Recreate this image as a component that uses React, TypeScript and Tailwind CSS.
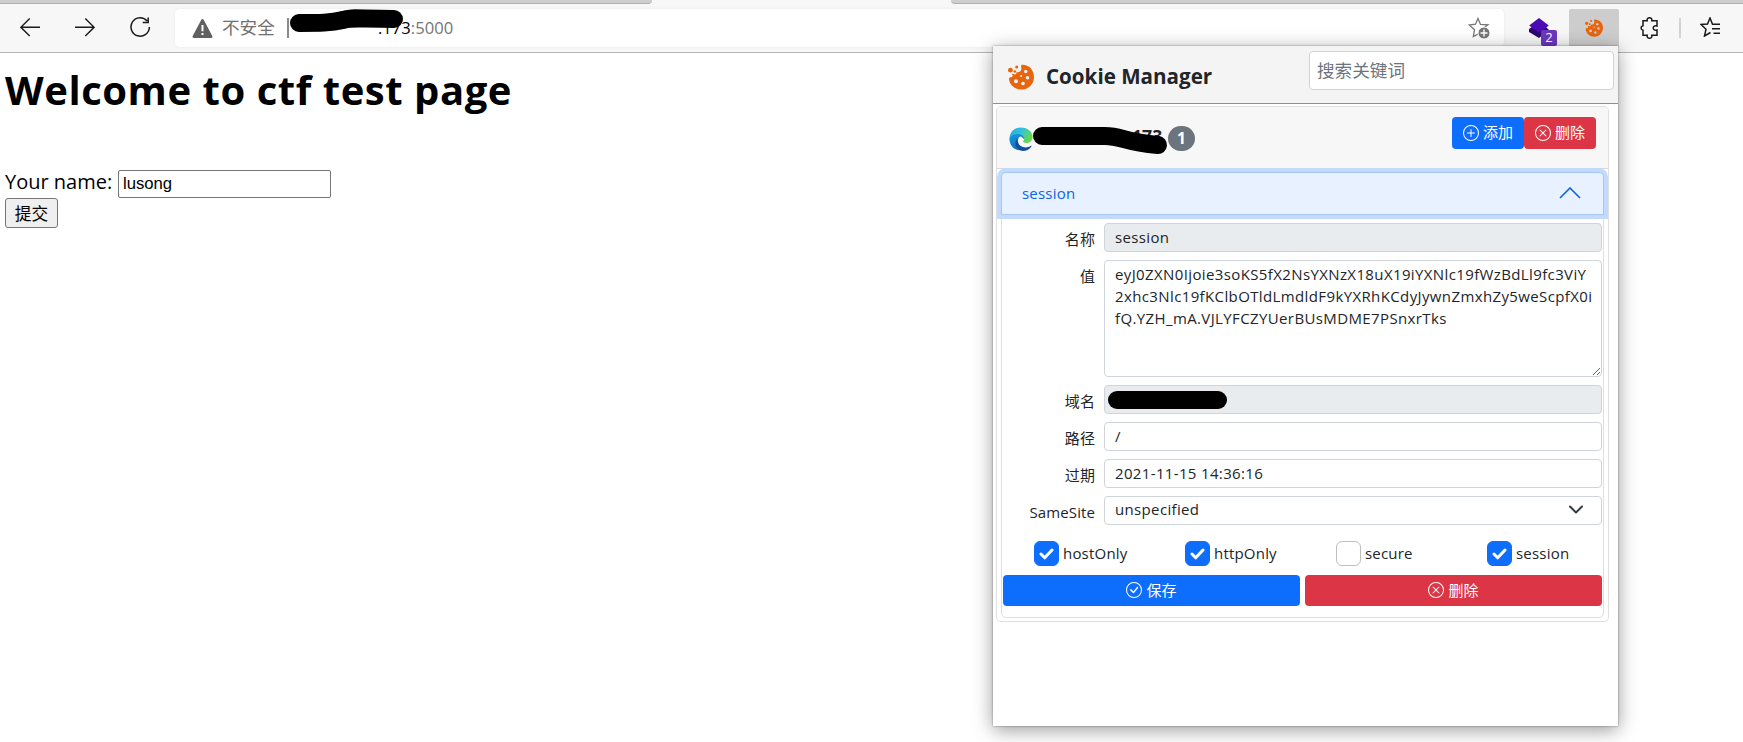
import React, { useState } from 'react';
import { BsPlusCircle, BsXCircle, BsCheckCircle } from 'react-icons/bs';

const cookieValue = [
  'eyJ0ZXN0Ijoie3soKS5fX2NsYXNzX18uX19iYXNlc19fWzBdLl9fc3ViY',
  '2xhc3Nlc19fKClbOTldLmdldF9kYXRhKCdyJywnZmxhZy5weScpfX0i',
  'fQ.YZH_mA.VJLYFCZYUerBUsMDME7PSnxrTks',
].join('\n');

const CookieIcon: React.FC<{ className?: string; hole: string }> = ({ className, hole }) => (
  <svg viewBox="0 0 26 26" className={className}>
    <path
      fill="#e8650d"
      d="M13.5 .8C20.8 .3 26 6 26 12.9A12.6 12.6 0 0 1 13.3 25.6C7 25.6 2.2 21.6 1 15.6c-.2-1 .2-1.9 1.2-2.5.9.5 2 .2 2.3-.8.3-.9 0-1.7-.8-2.2 1-.5 2-.3 2.8.5 1.5-.2 2.2-1.2 2-2.6 2.3.7 4.600-.7 4.900-3.100C13.500 3.500 12.600 2.300 13.500.8z"
    />
    <circle cx="2.4" cy="6.2" r="2.4" fill="#e8650d" />
    <circle cx="8.7" cy="3" r="1.5" fill="#e8650d" />
    <circle cx="6.8" cy="7.5" r="1.3" fill="#e8650d" />
    <g fill={hole}>
      <circle cx="17.7" cy="7.5" r="1.7" />
      <circle cx="13.2" cy="12" r="1" />
      <circle cx="19.5" cy="13.7" r="1.8" />
      <circle cx="8" cy="17.2" r="2" />
      <circle cx="15" cy="19.5" r="1.8" />
    </g>
  </svg>
);

const EdgeIcon: React.FC = () => (
  <svg viewBox="0 0 24 24" className="h-6 w-6 shrink-0">
    <defs>
      <linearGradient id="edgeTop" x1="0" y1="0" x2="1" y2=".4">
        <stop offset="0" stopColor="#2aa5e0" />
        <stop offset=".5" stopColor="#2fc2df" />
        <stop offset="1" stopColor="#67d74c" />
      </linearGradient>
      <linearGradient id="edgeLeft" x1="0" y1="0" x2=".4" y2="1">
        <stop offset="0" stopColor="#1b9de2" />
        <stop offset="1" stopColor="#0c6fc4" />
      </linearGradient>
    </defs>
    <path fill="url(#edgeLeft)" d="M.4 11.500C1.600 7 5 5 9 5c5 0 9 3 7 8l-4-3.500c-2 0-3 2-3 4.200 0 4 3.500 7.500 8.500 7.200C10 26.500.4 21.500.4 11.500z" />
    <path fill="#124f94" d="M8.700 11.600c-1.500 5 2.800 8.800 7.800 8.800 2 0 4-.6 5.300-1.600.5-.3.9.1.6.6-1.900 3-5.300 4.500-8.900 4.500-6.500-.9-9.600-8-4.800-12.300z" />
    <path fill="url(#edgeTop)" d="M.5 10.500C1.300 4.300 6 .4 12 .4c7 0 11.600 4.600 11.600 9.600 0 3.700-2.800 6-6 6-2.300 0-3.500-.7-3.500-1.400 0-.6.9-.9.9-2.500C15 9.500 12.800 7 8.700 7 5 7 2 8.500.5 10.500z" />
  </svg>
);

const Toolbar: React.FC = () => (
  <div className="flex h-[49px] items-start border-b border-[#b5b5b5] bg-[#f7f7f7]">
    <svg className="mt-[13px] ml-5 h-5 w-5" viewBox="0 0 20 20" fill="none" stroke="#1b1b1b" strokeWidth="1.4">
      <path d="M20 10.300H1M9.700 1.500L.9 10.300l8.800 8.800" />
    </svg>
    <svg className="mt-[13px] ml-[35px] h-5 w-5" viewBox="0 0 20 20" fill="none" stroke="#1b1b1b" strokeWidth="1.4">
      <path d="M0 10.300h19M10.300 1.500l8.800 8.800-8.800 8.800" />
    </svg>
    <svg className="mt-[12px] ml-[35px] h-[22px] w-[21px]" viewBox="0 0 21 22" fill="none" stroke="#1b1b1b" strokeWidth="1.5">
      <path d="M17.200 5A9.200 9.200 0 1 0 19.400 11M18.200 1.500v5h-5.500" />
    </svg>
    <div className="relative mt-[5px] ml-6 flex h-[38px] w-[1329px] items-center rounded-[5px] bg-white pl-[17px] shadow-[0_0_3px_rgba(0,0,0,0.06)]">
      <svg className="mt-px h-[19px] w-[21px]" viewBox="0 0 21 19">
        <path fill="#606060" d="M10.500 0c.5 0 1 .3 1.200.8l8.600 16.200c.5 1-.1 2-1.200 2H1.900c-1.100 0-1.700-1-1.200-2L9.300.8c.2-.5.7-.8 1.200-.8z" />
        <path stroke="#fff" strokeWidth="2" d="M10.500 6v6.300M10.500 14v2" />
      </svg>
      <span className="ml-[9px] w-[65px] pb-px text-[17.6px] text-[#707070]">不安全</span>
      <span className="h-5 w-[2px] bg-[#8a8a8a]" />
      <span className="ml-[89px] text-[16.6px] text-[#767676]">
        <span className="text-black">.173</span>:5000
      </span>
      <svg className="absolute top-0 left-[114px] h-[30px] w-[116px]" viewBox="0 0 116 30">
        <path
          d="M10 14C30 14 42 14 54 11C62 8 70 10 105 10"
          fill="none"
          stroke="#000"
          strokeWidth="18"
          strokeLinecap="round"
          strokeLinejoin="round"
        />
      </svg>
      <svg className="absolute top-2 right-[13px] h-[23px] w-[23px]" viewBox="0 0 23 23" fill="none">
        <path stroke="#767676" strokeWidth="1.3" d="M10 1.500l2.500 5.900 7.400.4-5.600 4.200-2.300 4-6.700 3.500 1.200-6.700L1.200 8l6.300-.8z" />
        <circle cx="16" cy="16" r="6" fill="#767676" stroke="#fff" />
        <path stroke="#fff" strokeWidth="1.4" d="M16 12.500v7M12.500 16h7" />
      </svg>
    </div>
    <div className="relative mt-[13px] ml-[25px] h-7 w-[29px]">
      <svg className="h-[22px] w-5" viewBox="0 0 20 22">
        <path fill="#2c0a71" d="M0 12l3-2 7 5 7-5 3 3-10 8L0 15z" />
        <path fill="#4b0ab4" d="M10 1l9.800 7.400L10 16 .2 8.400z" />
      </svg>
      <span className="absolute top-[13px] left-3 flex h-4 w-4 items-center justify-center rounded-[2px] bg-[#6b38bd] text-[13px] text-white">2</span>
    </div>
    <div className="mt-[5px] ml-[11px] flex h-[38px] w-[50px] items-center justify-center rounded-t-[2px] bg-[#cdcdcd]">
      <CookieIcon className="h-[18px] w-[18px]" hole="#cdcdcd" />
    </div>
    <svg className="mt-[13px] ml-[21px] h-[22px] w-5" viewBox="0 0 20 22" fill="none" stroke="#1b1b1b" strokeWidth="1.5">
      <path d="M3 3.800h4.200c-.5-2 .8-3 2.300-3s2.800 1 2.300 3H17v5.200c-2-.8-3.800.3-3.800 2s1.800 2.800 3.800 2v5.200h-5.200c.5 2-.8 3-2.300 3s-2.800-1-2.300-3H3v-5C.4 12.500.4 9.500 3 8.800z" />
    </svg>
    <span className="mt-[14px] ml-[19px] h-5 w-[2px] bg-[#d3d3d3]" />
    <svg className="mt-[13px] ml-[19px] h-5 w-[21px]" viewBox="0 0 21 20" fill="none" stroke="#1b1b1b" strokeWidth="1.5">
      <path d="M20 7.300h-7.500L10 1 7.500 7 1 7.500l5 4.700L4.500 19l6-3.500M12 11.700h8M13.500 16.200H20" />
    </svg>
  </div>
);

const fieldClass =
  'h-[29px] w-[498px] rounded-[4px] border border-[#ced4da] px-[10px] pb-[2px] text-[15px] tracking-[0.35px] text-[#212529] outline-none';

const Row: React.FC<{ label: string; children: React.ReactNode }> = ({ label, children }) => (
  <div className="flex">
    <label className="mr-[9px] w-[93px] pt-[5px] text-right text-[15px] leading-[22px] tracking-[0.1px] text-[#212529]">{label}</label>
    {children}
  </div>
);

const CheckItem: React.FC<{ label: string; checked: boolean; onToggle: () => void }> = ({ label, checked, onToggle }) => (
  <label className="flex h-[25px] w-[151px] shrink-0 items-center">
    <button
      onClick={onToggle}
      className={`mr-1 flex h-[25px] w-[25px] items-center justify-center rounded-[6px] border ${
        checked ? 'border-[#0d6efd] bg-[#0d6efd]' : 'border-[#bfbfbf] bg-white'
      }`}
    >
      {checked && (
        <svg className="h-[13px] w-[15px]" viewBox="0 0 15 13" fill="none" stroke="#fff" strokeWidth="3" strokeLinecap="round" strokeLinejoin="round">
          <path d="M2 7l3.700 3.800L13 3" />
        </svg>
      )}
    </button>
    <span className="text-[15px] tracking-[0.2px] text-[#212529]">{label}</span>
  </label>
);

const CookiePopup: React.FC = () => {
  const [flags, setFlags] = useState({ hostOnly: true, httpOnly: true, secure: false, session: true });

  return (
    <div className="absolute top-[46px] left-[993px] h-[680px] w-[625px] bg-white shadow-[0_4px_18px_rgba(0,0,0,0.4),0_0_2px_rgba(0,0,0,0.4)]">
      {/* Header */}
      <div className="flex h-[58px] items-start border-b border-[#8f8f8f] bg-[#f4f4f4]">
        <CookieIcon className="mt-[18px] ml-[15px] h-[26px] w-[26px]" hole="#f4f4f4" />
        <h2 className="mt-[15px] ml-[12px] w-[263px] text-[20.6px] leading-[30px] font-bold text-[#212529]">Cookie Manager</h2>
        <input
          placeholder="搜索关键词"
          className="mt-[5px] h-[39px] w-[305px] rounded-[4px] border border-[#ced4da] bg-white px-[7px] pb-[2px] text-[17.6px] outline-none placeholder:text-[#6c757d]"
        />
      </div>

      <div className="mt-[2px] ml-[3px] h-[516px] w-[613px] rounded-[5px] border border-[#dfdfdf]">
        {/* Domain */}
        <div className="relative flex h-[62px] items-start rounded-t-[4px] border-b border-[#d8d8d8] bg-[#f7f7f7] pl-[12px]">
          <div className="mt-5">
            <EdgeIcon />
          </div>
          <span className="mt-[16px] ml-[94px] w-[41px] text-[17.6px] leading-[26px] font-bold text-[#212529]">.173</span>
          <svg className="absolute top-[17px] left-[34px] h-[34px] w-[138px]" viewBox="0 0 138 34">
            <path
              d="M11 12H74C91 12 92 18 127 21"
              fill="none"
              stroke="#000"
              strokeWidth="18"
              strokeLinecap="round"
              strokeLinejoin="round"
            />
          </svg>
          <span className="mt-[19px] flex h-[25px] w-[27px] items-center justify-center rounded-full bg-[#6c757d] text-[15.5px] font-bold text-white">1</span>
          <button className="mt-[10px] ml-[257px] flex h-8 w-[72px] items-center justify-center gap-1 rounded-[4px] bg-[#0d6efd] pb-px text-[15px] text-white">
            <BsPlusCircle size={16} />
            添加
          </button>
          <button className="mt-[10px] flex h-8 w-[72px] items-center justify-center gap-1 rounded-[4px] bg-[#dc3545] pb-px text-[15px] text-white">
            <BsXCircle size={16} />
            删除
          </button>
        </div>

        {/* Cookie entry */}
        <div className="mx-1 mt-[3px] h-[446px] rounded-[5px] border border-[#dfdfdf]">
          <button className="relative flex h-[41px] w-full items-center justify-between rounded-t-[4px] bg-[#e7f1ff] pr-[22px] pb-px pl-5 text-[15px] tracking-[0.2px] text-[#0c63e4] shadow-[0_0_0_1px_#a9c7f3,0_0_0_5px_#c2dafe]">
            <span>session</span>
            <svg className="h-3 w-[22px]" viewBox="0 0 22 12" fill="none" stroke="#0c63e4" strokeWidth="1.6">
              <path d="M1 11L11 1l10 10" />
            </svg>
          </button>
          <div className="flex flex-col gap-2 pt-[9px]">
            <Row label="名称">
              <input className={`${fieldClass} bg-[#e9ecef]`} defaultValue="session" readOnly />
            </Row>
            <Row label="值">
              <textarea
                className="block h-[117px] w-[498px] rounded-[4px] border border-[#ced4da] py-[2px] pr-0 pl-[10px] text-[15px] leading-[22px] tracking-[0.38px] whitespace-pre text-[#212529] outline-none"
                defaultValue={cookieValue}
              />
            </Row>
            <Row label="域名">
              <div className={`${fieldClass} flex items-center bg-[#e9ecef] pt-[2px] pl-[3px]`}>
                <span className="h-[18px] w-[119px] rounded-full bg-black" />
              </div>
            </Row>
            <Row label="路径">
              <input className={fieldClass} defaultValue="/" />
            </Row>
            <Row label="过期">
              <input className={fieldClass} defaultValue="2021-11-15 14:36:16" />
            </Row>
            <Row label="SameSite">
              <div className={`${fieldClass} flex items-center justify-between pr-[18px]`}>
                <span>unspecified</span>
                <svg className="h-[9px] w-[14px]" viewBox="0 0 14 9" fill="none" stroke="#343a40" strokeWidth="2" strokeLinecap="round" strokeLinejoin="round">
                  <path d="M1 1.500l6 6 6-6" />
                </svg>
              </div>
            </Row>
          </div>
          <div className="mt-4 ml-8 flex">
            {(Object.keys(flags) as (keyof typeof flags)[]).map((key) => (
              <CheckItem key={key} label={key} checked={flags[key]} onToggle={() => setFlags({ ...flags, [key]: !flags[key] })} />
            ))}
          </div>
          <div className="mt-[9px] ml-px flex gap-[5px] text-[15px] text-white">
            <button className="flex h-[31px] w-[297px] items-center justify-center gap-1 rounded-[4px] bg-[#0d6efd] pb-px">
              <BsCheckCircle size={16} />
              保存
            </button>
            <button className="flex h-[31px] w-[297px] items-center justify-center gap-1 rounded-[4px] bg-[#dc3545] pb-px">
              <BsXCircle size={16} />
              删除
            </button>
          </div>
        </div>
      </div>
    </div>
  );
};

const App: React.FC = () => (
  <div className="relative h-[742px] w-[1743px] overflow-hidden bg-white font-['Open_Sans','Noto_Sans_CJK_SC',sans-serif] text-black">
    {/* Tab strip */}
    <div className="flex h-1 justify-between bg-[#f7f7f7]">
      <div className="h-1 w-[652px] rounded-br-[4px] border-b border-[#b0b0b0] bg-[#cdcdcd]" />
      <div className="h-1 w-[792px] rounded-bl-[4px] border-b border-[#b0b0b0] bg-[#cdcdcd]" />
    </div>
    <Toolbar />

    <main className="pl-[5px]">
      <h1 className="pt-[10px] text-[40px] leading-[54px] font-bold tracking-[0.55px]">Welcome to ctf test page</h1>
      <div className="mt-[52px] flex h-[29px] items-center text-[20px]">
        <label className="w-[113px] pb-[3px] whitespace-nowrap">Your name:</label>
        <input
          className="h-7 w-[213px] rounded-[2px] border border-[#767676] px-1 font-['Liberation_Sans',sans-serif] text-[16.67px] outline-none"
          defaultValue="lusong"
        />
      </div>
      <button className="flex h-[30px] w-[53px] items-center justify-center rounded-[3px] border border-[#767676] bg-[#efefef] text-[16.67px]">
        提交
      </button>
    </main>

    <CookiePopup />
  </div>
);

export default App;
